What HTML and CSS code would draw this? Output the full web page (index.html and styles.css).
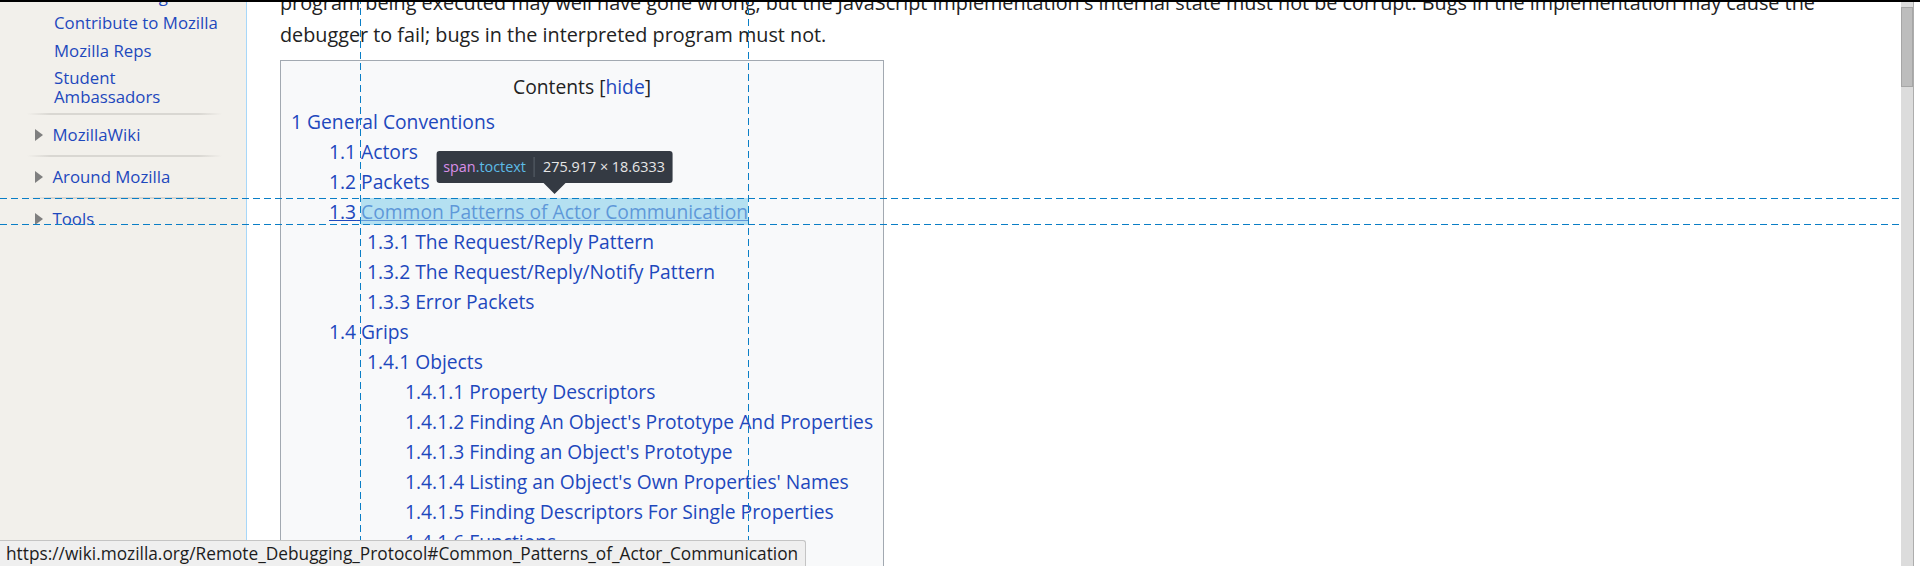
FILE: index.html
```html
<!DOCTYPE html>
<html lang="en">
<head>
<meta charset="utf-8">
<title>Remote Debugging Protocol - MozillaWiki</title>
<link rel="stylesheet" href="styles.css">
</head>
<body>
<div class="topline"></div>
<div class="window">
  <aside class="sidebar">
    <ul class="portal-list">
      <li><a href="#">Other meetings</a></li>
      <li><a href="#">Contribute to Mozilla</a></li>
      <li><a href="#">Mozilla Reps</a></li>
      <li><a href="#">Student Ambassadors</a></li>
    </ul>
    <div class="portal"><h3><span class="tri"></span><a href="#">MozillaWiki</a></h3></div>
    <div class="portal"><h3><span class="tri"></span><a href="#">Around Mozilla</a></h3></div>
    <div class="portal"><h3><span class="tri"></span><a href="#">Tools</a></h3></div>
  </aside>

  <main class="content">
    <p class="para">program being executed may well have gone wrong, but the JavaScript implementation's internal state must not be corrupt. Bugs in the implementation may cause the debugger to fail; bugs in the interpreted program must not.</p>

    <div class="toc">
      <div class="toctitle"><h2>Contents</h2> <span class="toctoggle">[<a href="#">hide</a>]</span></div>
      <ul class="toclist">
        <li><a href="#"><span class="tocnumber">1</span> <span class="toctext">General Conventions</span></a>
          <ul>
            <li><a href="#"><span class="tocnumber">1.1</span> <span class="toctext">Actors</span></a></li>
            <li><a href="#"><span class="tocnumber">1.2</span> <span class="toctext">Packets</span></a></li>
            <li><a href="#" class="hover"><span class="tocnumber">1.3</span> <span class="toctext picked">Common Patterns of Actor Communication<span class="box-overlay"></span><span class="guide gh gtop"></span><span class="guide gh gbottom"></span><span class="guide gv gleft"></span><span class="guide gv gright"></span><span class="infobar"><span class="tag">span</span><span class="cls">.toctext</span><span class="sep"></span><span class="dims">275.917 × 18.6333</span></span></span></a>
              <ul>
                <li><a href="#"><span class="tocnumber">1.3.1</span> <span class="toctext">The Request/Reply Pattern</span></a></li>
                <li><a href="#"><span class="tocnumber">1.3.2</span> <span class="toctext">The Request/Reply/Notify Pattern</span></a></li>
                <li><a href="#"><span class="tocnumber">1.3.3</span> <span class="toctext">Error Packets</span></a></li>
              </ul>
            </li>
            <li><a href="#"><span class="tocnumber">1.4</span> <span class="toctext">Grips</span></a>
              <ul>
                <li><a href="#"><span class="tocnumber">1.4.1</span> <span class="toctext">Objects</span></a>
                  <ul>
                    <li><a href="#"><span class="tocnumber">1.4.1.1</span> <span class="toctext">Property Descriptors</span></a></li>
                    <li><a href="#"><span class="tocnumber">1.4.1.2</span> <span class="toctext">Finding An Object's Prototype And Properties</span></a></li>
                    <li><a href="#"><span class="tocnumber">1.4.1.3</span> <span class="toctext">Finding an Object's Prototype</span></a></li>
                    <li><a href="#"><span class="tocnumber">1.4.1.4</span> <span class="toctext">Listing an Object's Own Properties' Names</span></a></li>
                    <li><a href="#"><span class="tocnumber">1.4.1.5</span> <span class="toctext">Finding Descriptors For Single Properties</span></a></li>
                    <li><a href="#"><span class="tocnumber">1.4.1.6</span> <span class="toctext">Functions</span></a></li>
                    <li><a href="#"><span class="tocnumber">1.4.1.7</span> <span class="toctext">Function Scopes</span></a></li>
                  </ul>
                </li>
              </ul>
            </li>
          </ul>
        </li>
      </ul>
    </div>
  </main>

  <div class="scrollbar"><div class="thumb"></div></div>
  <div class="edge"></div>
</div>
<div class="statusbar">https://wiki.mozilla.org/Remote_Debugging_Protocol#Common_Patterns_of_Actor_Communication</div>
</body>
</html>
```
FILE: styles.css
```css
html, body {
  margin: 0;
  padding: 0;
}

body {
  width: 1920px;
  height: 566px;
  overflow: hidden;
  display: flex;
  flex-direction: column;
  position: relative;
  background: #fff;
  font-family: "Open Sans", "Liberation Sans", sans-serif;
  color: #222;
}

a {
  color: #1e48bd;
  text-decoration: none;
}

.topline {
  flex: none;
  height: 2px;
  background: #000;
}

.window {
  flex: 1;
  min-height: 0;
  display: flex;
  overflow: hidden;
}

/* ---------- sidebar ---------- */
.sidebar {
  flex: none;
  width: 246px;
  background: #f2f0eb;
  border-right: 1px solid #a7d7f9;
}

.portal-list {
  list-style: none;
  margin: -20px 0 2.5px;
  padding: 0 22px 0 54px;
  font-size: 16.8px;
  line-height: 19.3px;
}

.portal-list li {
  padding: 4px 0;
}

.portal {
  margin: 0 24px 0 27px;
}

.portal h3 {
  margin: 0;
  padding: 12px 0 10px 8px;
  font-size: 16.8px;
  line-height: 20px;
  font-weight: normal;
  display: flex;
  align-items: center;
  background-image: linear-gradient(to right, rgba(214, 212, 207, 0) 0%, #d9d7d2 12%, #d9d7d2 88%, rgba(214, 212, 207, 0) 100%);
  background-repeat: no-repeat;
  background-size: 100% 2px;
  background-position: 0 0;
}

.tri {
  width: 0;
  height: 0;
  border-left: 8px solid #7f7f7f;
  border-top: 6px solid transparent;
  border-bottom: 6px solid transparent;
  margin: 1px 9.5px 0 0;
}

/* ---------- content ---------- */
.content {
  flex: 1;
  min-width: 0;
  padding: 0 40px 0 33px;
}

.para {
  margin: -15.3px 0 9.3px;
  font-size: 19.8px;
  line-height: 32px;
  color: #222;
}

.toc {
  display: table;
  background: #f8f9fa;
  border: 1px solid #a2a9b1;
  padding: 11px 10px 20px 10px;
  font-size: 19.25px;
  line-height: 30px;
}

.toctitle {
  text-align: center;
  color: #222;
}

.toctitle h2 {
  display: inline;
  margin: 0;
  font-size: 19.25px;
  font-weight: normal;
}

.toclist,
.toclist ul {
  list-style: none;
  margin: 0;
  padding: 0;
}

.toclist {
  margin-top: 5.3px;
}

.toclist ul {
  margin-left: 38px;
}

.toclist li {
  white-space: nowrap;
}

.toclist a.hover {
  text-decoration: underline;
}

/* ---------- devtools highlighter ---------- */
.picked {
  position: relative;
}

.box-overlay {
  position: absolute;
  inset: 0;
  background: rgba(135, 206, 235, 0.6);
}

.guide {
  position: absolute;
}

.gh {
  left: -2000px;
  right: -2000px;
  height: 1px;
  background: repeating-linear-gradient(to right, #0a7ec6 0 7px, transparent 7px 11px);
}

.gtop { top: 0; }
.gbottom { bottom: 0; }

.gv {
  top: -300px;
  bottom: -600px;
  width: 1px;
  background: repeating-linear-gradient(to bottom, #0a7ec6 0 7px, transparent 7px 11px);
}

.gleft { left: -1px; }
.gright { right: -1px; }

.infobar {
  position: absolute;
  left: 50%;
  bottom: calc(100% + 15px);
  transform: translateX(-50%);
  height: 32px;
  padding: 0 8px 0 7px;
  display: flex;
  align-items: center;
  background: #343a43;
  border-radius: 3px;
  font-size: 14.4px;
  line-height: 20px;
  white-space: nowrap;
  color: #e6e6e6;
  z-index: 3;
}

.infobar::after {
  content: "";
  position: absolute;
  top: 100%;
  left: 50%;
  margin-left: -11px;
  border-left: 11px solid transparent;
  border-right: 11px solid transparent;
  border-top: 11px solid #343a43;
}

.tag { color: #d98fe8; }
.cls { color: #5cbbe6; }

.sep {
  width: 1px;
  height: 20px;
  background: #5b626c;
  margin: 0 8px;
}

.dims { color: #e6e6e6; }

/* ---------- scrollbar ---------- */
.scrollbar {
  flex: none;
  width: 12px;
  padding-top: 5px;
  background: #dcdcdc;
  border-right: 1px solid #adadad;
  position: relative;
  z-index: 4;
}

.thumb {
  height: 80px;
  box-sizing: border-box;
  background: #bdbdbd;
  border: 1px solid #a6a6a6;
}

.edge {
  flex: none;
  width: 6px;
  background: #fff;
  position: relative;
  z-index: 4;
}

/* ---------- status bar ---------- */
.statusbar {
  position: absolute;
  left: 0;
  bottom: 0;
  height: 25px;
  line-height: 25px;
  padding: 0 7px 0 6px;
  background: #efefef;
  border-top: 1px solid #c4c4c4;
  border-right: 1px solid #c4c4c4;
  border-top-right-radius: 3px;
  font-size: 17.3px;
  color: #1c1c1c;
  white-space: nowrap;
  z-index: 5;
}
```
